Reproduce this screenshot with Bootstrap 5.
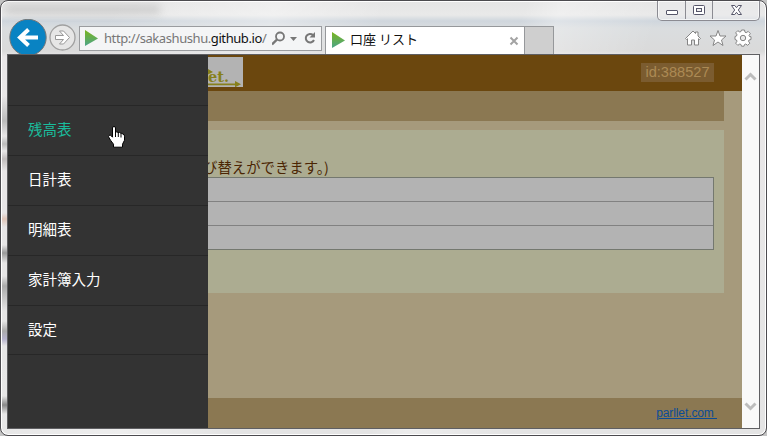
<!DOCTYPE html>
<html lang="ja">
<head>
<meta charset="utf-8">
<meta name="viewport" content="width=device-width, initial-scale=1">
<title>口座 リスト</title>
<link href="https://cdn.jsdelivr.net/npm/bootstrap@5.3.0/dist/css/bootstrap.min.css" rel="stylesheet">
<style>
html,body{height:100%;overflow:hidden}
body{background:#c4c4c4;font-family:"Noto Sans CJK JP","Liberation Sans",sans-serif}
svg{display:block;flex:none}
.win{width:767px;height:436px;border:1px solid #4c4b4f;border-radius:8px;box-shadow:inset 0 0 0 1px #fff;padding:0 6px;
 background:linear-gradient(transparent 95px,#bbb 120px,transparent 135px,#bbb 143px,transparent 150px,#c0bcbc 158px,transparent 170px 212px,#dfc5b8 218px,transparent 226px 244px,#999 252px,transparent 262px 275px,#aaa 285px,transparent 310px 320px,#aaa 330px,#b5b2cc 338px,transparent 345px 395px,#888 404px,transparent 413px) 1px 0/5px 100% no-repeat,
 linear-gradient(110deg,transparent 0 12%,#ffffff60 30%,transparent 42% 57%,#ffffff50 61%,transparent 72%),
 linear-gradient(#e5e5e5 0,#e9e9e9 14px,#cfd6dd 20px,#dadddf 27px,#dadada 50px,#e9e7e8 56px,#e4e4e4 100%)}
.chrome{height:53px;padding-left:2px}
.haze{left:4px;top:4px;width:155px;height:9px;background:#aaa;filter:blur(4px);opacity:.45}
.backbtn{margin:18px 0 0 0}
.fwd{margin:23px 0 0 2px}
.addr{width:243px;height:25px;margin:25px 0 0 3px;border:1px solid #9a9c9f;background:#f4f5f6;padding-left:4px}
.url{width:168px;margin-left:5px;font:13px/23px "Noto Sans",sans-serif;letter-spacing:-.42px;color:#777}
.url b{font-weight:400;color:#111}
.wtab{width:200px;height:28px;margin:25px 0 0 3px;background:#fff;border:1px solid #96989b;border-bottom:0;padding:0 5px;font-size:13px;color:#111}
.wtab span{margin-top:-3px}
.newtab{width:29px;height:28px;margin-top:25px;background:#cfcfcf;border:1px solid #96989b;border-left:0;border-bottom:0}
.ctrls{width:103px;height:20px;right:6px;top:0;border:1px solid #8b8b92;border-top:0;border-radius:0 0 5px 5px;background:#ececee80;box-shadow:inset 0 0 0 1px #fff9}
.ctrls span{height:18px;border-right:1px solid #8b8b92}
.tools{margin:28px 8px 0 auto;gap:7px}
.page{height:375px;border:1px solid #5f5f62;background:#a69a7c}
.side{width:200px;background:#333;flex:none}
.side a{height:50px;padding-left:20px;border-bottom:1px solid #272727;color:#fff;font-size:14.5px;line-height:46px;text-decoration:none;display:block}
.side a:first-child{height:51px}
.side a:last-child{height:49px}
.side a.on{color:#1abc9c}
.topbar{height:36px;background:#6b470e}
.logo{width:35px;height:30px;margin-top:2px;background:#b3b3b3}
.uid{width:73px;height:19px;margin:8px 28px 0 auto;background:#7b5c30;color:#ac8a54;font:14.6px/19px "Liberation Sans",sans-serif;text-align:center}
.band{height:30px;margin-right:18px;background:#8b7852}
.panel{height:163px;margin:9px 18px 0 0;background:#acac91;padding-top:28px}
.note{height:19px;line-height:17px;font-size:14.4px;color:#4b2503;white-space:nowrap;margin-left:-5px}
.rows{width:506px;border:1px solid #74786f;border-left:0;background:#b3b3b3}
.rows div{height:24px;border-bottom:1px solid #818181}
.rows div:last-child{border:0;height:23px}
.foot{height:30px;background:#8b7852;padding-right:25px;font:12px/30px "Liberation Sans",sans-serif;text-align:right}
.foot a{color:#0a4c98;white-space:pre;text-decoration:underline;letter-spacing:-.1px}
.scroll{width:17px;background:#f9f9f9;padding:16px 0 16px 2px}
.cursor{left:107px;top:125px}
</style>
<script src="https://cdn.jsdelivr.net/npm/bootstrap@5.3.0/dist/js/bootstrap.bundle.min.js"></script>
</head>
<body>
<div class="win position-relative overflow-hidden">
 <div class="haze position-absolute"></div>
 <header class="chrome d-flex align-items-start">
  <svg class="backbtn" width="38" height="35" viewBox="0 0 38 35"><circle cx="19" cy="18.500" r="18.200" fill="#0983c3" stroke="#777" stroke-width="1"/><path d="M29 18.500H13M19.500 10.500L11 18.500l8.500 8" fill="none" stroke="#fff" stroke-width="4"/></svg>
  <svg class="fwd" width="27" height="27" viewBox="0 0 27 27"><circle cx="13.500" cy="13.500" r="12.500" fill="#e6e6e6" stroke="#a0a0a0" stroke-width="1.300"/><path d="M6.500 11.500h8l-4-4.500h4l6 6.500-6 6.500h-4l4-4.500h-8z" fill="#fff" stroke="#999"/></svg>
  <div class="addr d-flex align-items-center">
   <svg width="15" height="17" viewBox="0 0 15 17"><defs><linearGradient id="g" x2="0" y2="1"><stop stop-color="#7ab51d"/><stop offset="1" stop-color="#4ba58a"/></linearGradient></defs><path d="M1 0l13 8.500-13 7.500z" fill="url(#g)"/></svg>
   <div class="url text-nowrap">http://sakashushu.<b>github.io</b>/</div>
   <svg width="48" height="23" viewBox="0 0 48 23" fill="none" stroke="#777"><circle cx="8" cy="9.500" r="4" stroke-width="1.800"/><path d="M5 12.500l-5 5" stroke-width="2.400"/><path d="M18 10h7l-3.500 4z" fill="#777" stroke="none"/><path d="M41 8A4.300 4.300 0 1 0 42 13" stroke-width="2"/><path d="M43 5v5.500h-5.500z" fill="#777" stroke="none"/></svg>
  </div>
  <div class="wtab d-flex align-items-center">
   <svg width="15" height="17" viewBox="0 0 15 17"><path d="M1 0l13 8.500-13 7.500z" fill="url(#g)"/></svg>
   <span class="ms-1 text-nowrap">口座 リスト</span>
   <svg class="ms-auto" width="10" height="10" viewBox="0 0 10 10"><path d="M1.500 1.500l7 7m0-7l-7 7" stroke="#a3a3a3" stroke-width="2"/></svg>
  </div>
  <div class="newtab"></div>
  <div class="tools d-flex">
   <svg width="18" height="18" viewBox="0 0 18 18"><path d="M9 2l2.500 2.500V3h2.500v4l2.500 2.500-1 1-1-.8V16h-4v-5h-3v5h-4V9.700l-1 .8-1-1z" fill="#fff" stroke="#858585"/></svg>
   <svg width="18" height="18" viewBox="0 0 18 18"><path d="M9 1.500l2 5.500h6l-4.500 4 1.500 5.500-5-3.500-5 3.500L5.500 11 1 7h6z" fill="#fff" stroke="#858585"/></svg>
   <svg width="18" height="18" viewBox="-9 -9 18 18"><path d="M-1.500-8h3l.5 2.200 1.200.5 2-1.300 2.100 2.100-1.300 2L6.500-1.500 8-1.300v2.800L6 2l-.5 1.200 1.300 2-2.100 2.100-2-1.300-1.200.5-.5 1.700h-2.500L-2 6.500-3.200 6l-2 1.300-2.100-2.100 1.300-2L-6.500 2-8 1.500v-3L-6.500-2-6-3.200l-1.300-2 2.100-2.100 2 1.300 1.200-.5z" fill="#fff" stroke="#858585"/><circle r="2.700" fill="#e8e8e8" stroke="#858585"/></svg>
  </div>
 </header>
 <div class="ctrls position-absolute d-flex">
  <span><svg width="27" height="18" viewBox="0 0 27 18"><rect x="8.500" y="9.500" width="11" height="4" rx=".5" fill="#fff" stroke="#56566a"/></svg></span>
  <span><svg width="26" height="18" viewBox="0 0 26 18"><rect x="7.500" y="4.500" width="11" height="9" rx="1" fill="#fff" stroke="#56566a"/><rect x="10.500" y="7.500" width="5" height="3" fill="#eee" stroke="#56566a"/></svg></span>
  <svg width="47" height="18" viewBox="0 0 47 18"><path d="M18.500 4.500h3.300l1.700 2.200 1.700-2.200h3.300l-3.200 4.500 3.200 4.500h-3.300l-1.700-2.200-1.700 2.200h-3.300l3.200-4.500z" fill="#fff" stroke="#56566a"/></svg>
 </div>
 <div class="page d-flex overflow-hidden">
  <nav class="side">
   <a href="#">&nbsp;</a><a class="on" href="#">残高表</a><a href="#">日計表</a><a href="#">明細表</a><a href="#">家計簿入力</a><a href="#">設定</a>
  </nav>
  <main class="flex-grow-1 d-flex flex-column overflow-hidden">
   <div class="topbar d-flex">
    <div class="logo"><svg width="35" height="30" viewBox="0 0 35 30"><path d="M0 12l5 3-5 2.500zM0 26.500h27v-2.500l6 3.300-6 3v-2H0z" fill="#87801c"/><text x="0" y="25" font-family="DejaVu Serif" font-weight="700" font-size="14" textLength="21" lengthAdjust="spacingAndGlyphs" fill="#87801c">et.</text></svg></div>
    <div class="uid">id:388527</div>
   </div>
   <div class="band"></div>
   <section class="panel">
    <div class="note">び替えができます。)</div>
    <div class="rows"><div></div><div></div><div></div></div>
   </section>
   <footer class="foot mt-auto"><a href="#">parllet.com </a></footer>
  </main>
  <div class="scroll d-flex flex-column justify-content-between">
   <svg width="13" height="11" viewBox="0 0 13 11"><path d="M1.500 8.500l5-5 5 5" fill="none" stroke="#bdbdbd" stroke-width="3"/></svg>
   <svg width="13" height="11" viewBox="0 0 13 11"><path d="M1.500 2.500l5 5 5-5" fill="none" stroke="#bdbdbd" stroke-width="3"/></svg>
  </div>
 </div>
 <svg class="cursor position-absolute" width="18" height="22" viewBox="0 0 18 22"><path d="M4.500 2q0-1.500 1.500-1.500T7.500 2v4q1.500-.5 2.500.5 1.500-.5 2.500.7 1.700-.2 2.500 1 1.500 0 1.500 2v4l-2 4v3h-9v-3l-3-4-2-3.500q0-2 2-1.500l2 2z" fill="#fff" stroke="#000"/><path d="M7.500 6v5m2.800-4v4m2.700-3.500v4" stroke="#000"/></svg>
</div>
</body>
</html>
